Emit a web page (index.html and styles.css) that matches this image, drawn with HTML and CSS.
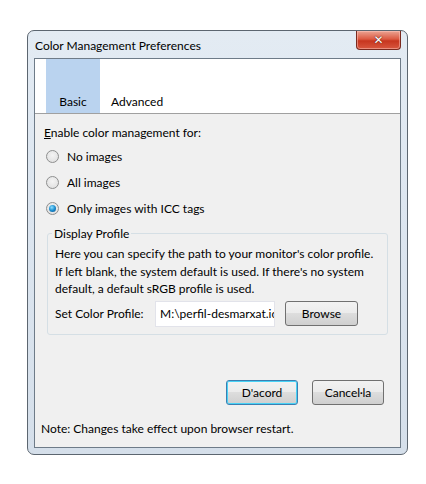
FILE: index.html
```html
<!DOCTYPE html>
<html>
<head>
<meta charset="utf-8">
<link rel="stylesheet" href="styles.css">
</head>
<body>
<div class="window">
  <div class="titlebar">
    <span class="title">Color Management Preferences</span>
    <div class="close"><span class="x">✕</span></div>
  </div>
  <div class="client">
    <div class="tabs">
      <div class="tab active">Basic</div>
      <div class="tab">Advanced</div>
    </div>
    <div class="panel">
      <div class="label"><u>E</u>nable color management for:</div>
      <div class="radios">
        <div class="radio"><span class="dot"></span>No images</div>
        <div class="radio"><span class="dot"></span>All images</div>
        <div class="radio"><span class="dot on"></span>Only images with ICC tags</div>
      </div>
      <fieldset class="group">
        <legend>Display Profile</legend>
        <p class="desc">Here you can specify the path to your monitor's color profile. If left blank, the system default is used. If there's no system default, a default sRGB profile is used.</p>
        <div class="row">
          <span class="rowlabel">Set Color Profile:</span>
          <input class="input" type="text" readonly value="M:\perfil-desmarxat.icc">
          <div class="btn browse">Browse</div>
        </div>
      </fieldset>
      <div class="buttons">
        <div class="btn ok">D'acord</div>
        <div class="btn">Cancel·la</div>
      </div>
      <div class="note">Note: Changes take effect upon browser restart.</div>
    </div>
  </div>
</div>
</body>
</html>
```
FILE: styles.css
```css
html, body { margin: 0; padding: 0; background: #fff; }
body { font-family: Lato, "Open Sans", sans-serif; font-size: 12px; color: #000; }
.window {
  margin: 30px 0 0 27px;
  height: 417px;
  width: 367px;
  border: 1px solid #5c6670;
  border-radius: 7px;
  background: linear-gradient(180deg, #e3ebf3 0%, #dde6f0 40%, #d5dfea 100%);
  display: flex;
  flex-direction: column;
  padding: 0 6px 6px 6px;
}
.titlebar {
  height: 27px;
  display: flex;
  justify-content: space-between;
  align-items: flex-start;
}
.title { padding: 7px 0 0 1px; color: #000; }
.close {
  width: 43px;
  height: 18px;
  border: 1px solid #7a2a1f;
  border-top: none;
  border-radius: 0 0 4px 4px;
  background: linear-gradient(180deg, #eba493 0%, #dc5a42 45%, #c7361f 55%, #d8573f 100%);
  display: flex;
  align-items: center;
  justify-content: center;
  box-shadow: inset 0 0 0 1px rgba(255,200,190,0.5);
}
.x { color: #fff; font-weight: bold; font-size: 12px; line-height: 1; text-shadow: 0 0 1px #5a1a10, 0 0 1px #5a1a10; font-family: "DejaVu Sans", sans-serif; }
.client {
  flex: 1;
  border: 1px solid #6e7b88;
  background: #f0f0f0;
  display: flex;
  flex-direction: column;
}
.tabs {
  height: 54px;
  background: #fff;
  border-bottom: 1px solid #a0a0a0;
  display: flex;
  align-items: stretch;
  padding-left: 11px;
}
.tab {
  display: flex;
  align-items: flex-end;
  justify-content: center;
  padding-bottom: 4px;
  box-sizing: border-box;
}
.tab.active { width: 54px; background: #bad3ef; }
.tab + .tab { padding-left: 11px; }
.panel { flex: 1; padding: 11px 12px 0 9px; display: flex; flex-direction: column; }
.label { height: 17px; }
.radios { margin-top: 6px; display: flex; flex-direction: column; gap: 9px; }
.radio { display: flex; align-items: center; height: 17px; }
.dot {
  width: 11px; height: 11px; border-radius: 50%;
  border: 1px solid #8e8f8f;
  background: radial-gradient(circle at 50% 40%, #f4f4f4 0%, #dcdcdc 100%);
  margin: 0 8px 0 2px;
  position: relative;
}
.dot.on::after {
  content: "";
  position: absolute; left: 2px; top: 2px; width: 7px; height: 7px; border-radius: 50%;
  background: radial-gradient(circle at 40% 35%, #8fe0ff 0%, #1c8ed0 50%, #0a4d86 100%);
}
.group {
  margin: 9px 0 0 3px;
  padding: 0 6px 7px 7px;
  border: 1px solid #d5dfe5;
  border-radius: 3px;
  width: 341px;
  box-sizing: border-box;
}
legend { padding: 0 2px; margin-left: -3px; }
.desc { margin: 4px 0 0 0; line-height: 17.5px; }
.row { display: flex; align-items: center; margin-top: 3px; }
.rowlabel { width: 100px; }
.input {
  width: 120px; height: 26px; box-sizing: border-box;
  background: #fff; border: 1px solid #e2e3ea;
  padding: 0 0 0 4px; margin: 0;
  font: inherit; color: #000; outline: none;
}
.btn {
  height: 25px; box-sizing: border-box;
  border: 1px solid #707070; border-radius: 3px;
  background: linear-gradient(180deg, #f2f2f2 0%, #ebebeb 49%, #dddddd 50%, #cfcfcf 100%);
  display: flex; align-items: center; justify-content: center;
}
.browse { width: 73px; margin-left: 10px; }
.buttons { margin-top: 45px; display: flex; justify-content: flex-end; gap: 14px; padding-right: 4px; }
.buttons .btn { width: 72px; }
.btn.ok { border-color: #3c7fb1; box-shadow: inset 0 0 0 1px #48d2f6; }
.note { margin-top: 16px; margin-left: -3px; }
```
